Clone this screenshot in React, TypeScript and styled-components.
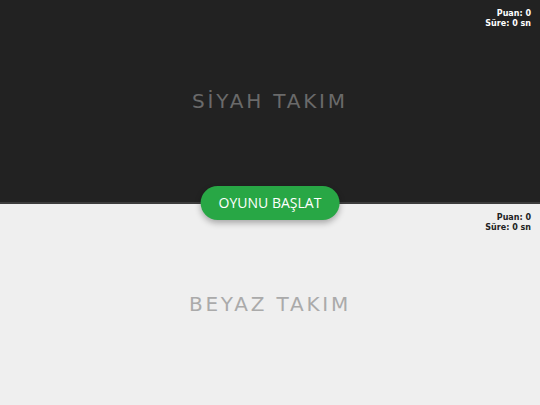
import React from "react";
import styled, {createGlobalStyle} from "styled-components";

const GlobalStyle = createGlobalStyle`
    html, body, #root {
        margin: 0;
        padding: 0;
        width: 100%;
        height: 100%;
        overflow: hidden;
    }
`

type TeamSide = "black" | "white";

interface TeamHalfProps {
    side: TeamSide;
    name: string;
    score: number;
    seconds: number;
}

const TeamHalf: React.FC<TeamHalfProps> = (props) => {
    return (
        <Half $side={props.side}>
            <ScoreBox $side={props.side}>
                <div>Puan: {props.score}</div>
                <div>Süre: {props.seconds} sn</div>
            </ScoreBox>
            <TeamName $side={props.side}>{props.name}</TeamName>
        </Half>
    )
}

export default function App() {
    return (
        <>
            <GlobalStyle />
            <Board>
                <TeamHalf side="black" name="SİYAH TAKIM" score={0} seconds={0} />
                <TeamHalf side="white" name="BEYAZ TAKIM" score={0} seconds={0} />
                <StartButton>OYUNU BAŞLAT</StartButton>
            </Board>
        </>
    )
}

const Board = styled.div`
    position: relative;
    display: flex;
    flex-direction: column;
    width: 100vw;
    height: 100vh;
`

const Half = styled.div<{ $side: TeamSide }>`
    box-sizing: border-box;
    position: relative;
    flex: 1;
    display: flex;
    align-items: center;
    justify-content: center;
    background: ${({$side}) => $side === "black" ? "#222222" : "#efefef"};
    border-bottom: ${({$side}) => $side === "black" ? "2px solid #3c3c3c" : "none"};
`

const TeamName = styled.div<{ $side: TeamSide }>`
    font-family: "DejaVu Sans", Verdana, sans-serif;
    font-size: 20px;
    letter-spacing: 2.8px;
    color: ${({$side}) => $side === "black" ? "#6a6a6a" : "#aaaaaa"};
`

const ScoreBox = styled.div<{ $side: TeamSide }>`
    position: absolute;
    top: 9px;
    right: 9px;
    text-align: right;
    font-family: "DejaVu Sans", Verdana, sans-serif;
    font-size: 8px;
    font-weight: bold;
    line-height: 10px;
    color: ${({$side}) => $side === "black" ? "#ffffff" : "#222222"};
`

const StartButton = styled.button`
    position: absolute;
    left: 50%;
    top: 50%;
    transform: translate(-50%, -50%);
    height: 34px;
    padding: 0 18px;
    border: none;
    border-radius: 17px;
    background: #28a745;
    color: #ffffff;
    font-family: "Open Sans", sans-serif;
    font-size: 14px;
    box-shadow: 0 3px 6px rgba(0, 0, 0, 0.3);
    cursor: pointer;
`
